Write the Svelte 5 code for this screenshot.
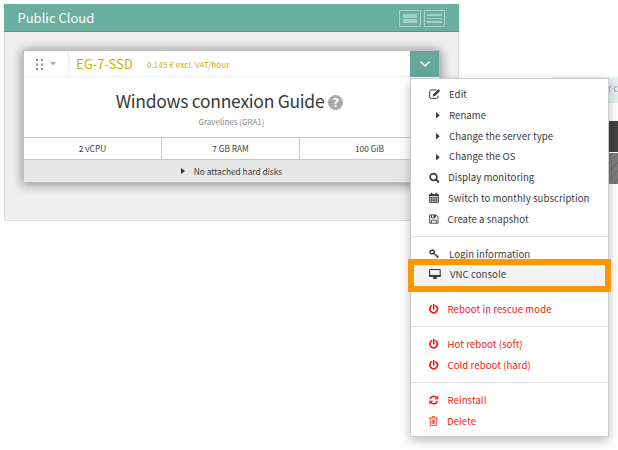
<script>
  const groups = [
    [
      { icon: 'edit', label: 'Edit', x: 20 },
      { icon: 'caret', label: 'Rename', x: 20 },
      { icon: 'caret', label: 'Change the server type', x: 20 },
      { icon: 'caret', label: 'Change the OS', x: 20 },
      { icon: 'search', label: 'Display monitoring', x: 19 },
      { icon: 'calendar', label: 'Switch to monthly subscription', x: 19 },
      { icon: 'save', label: 'Create a snapshot', x: 18.5 }
    ],
    [
      { icon: 'key', label: 'Login information', x: 20 },
      { icon: 'screen', label: 'VNC console', x: 21, active: true }
    ],
    [{ icon: 'power', label: 'Reboot in rescue mode', x: 18.5, danger: true }],
    [
      { icon: 'power', label: 'Hot reboot (soft)', x: 18.5, danger: true },
      { icon: 'power', label: 'Cold reboot (hard)', x: 18.5, danger: true }
    ],
    [
      { icon: 'refresh', label: 'Reinstall', x: 18.5, danger: true },
      { icon: 'trash', label: 'Delete', x: 18, danger: true }
    ]
  ];
  const specs = ['2 vCPU', '7 GB RAM', '100 GiB'];
</script>

{#snippet glyph(name)}
  <svg class="glyph" width="14" height="12" viewBox="0 0 14 12" fill="none" stroke="currentColor">
    {#if name === 'edit'}
      <path d="M7.5 2H2.2Q.7 2 .7 3.500V9Q.7 10.400 2.200 10.400H7.500Q9 10.400 9 9V7.500" stroke-width="1" />
      <path d="M3.800 8.500L4.200 6.300L9.300 1.200L11.100 3L6 8.100Z" fill="currentColor" stroke="none" />
    {:else if name === 'caret'}
      <path d="M7 3v6.500l3.700-3.250z" fill="currentColor" stroke="none" />
    {:else if name === 'search'}
      <circle cx="4.500" cy="5" r="3.400" stroke-width="1.700" />
      <path d="M7 7.500L9.300 9.800" stroke-width="2" stroke-linecap="round" />
    {:else if name === 'calendar'}
      <path d="M.5 2.500h9v8h-9zM.5 5.200h9M.5 7h9M.5 8.800h9M2.700 5v5.500M5 5v5.500M7.300 5v5.500" stroke-width=".8" />
      <path d="M.3 2.300h9.400v1.800H.3zM2 .8h1.300v2.400H2zM6.700.8H8v2.400H6.700z" fill="currentColor" stroke="none" />
    {:else if name === 'save'}
      <path d="M.7 1.900h6.300l2 2v6.300H.7zM2.500 2v2.800h3.800V2M2.500 10V7.200h4.800V10" stroke-width=".9" />
      <path d="M4.700 2h1.500v2.600H4.700z" fill="currentColor" stroke="none" />
    {:else if name === 'key'}
      <ellipse cx="3.100" cy="4" rx="2.200" ry="1.800" transform="rotate(-40 3.100 4)" stroke-width="1.400" />
      <path d="M4.700 5.200L9.300 9.700M6.300 7.600L7.300 6.400M7.700 9.400L9.400 7.600" stroke-width="1.200" />
    {:else if name === 'screen'}
      <rect x=".6" y="1.500" width="10.600" height="7" rx=".6" stroke-width="1.100" />
      <path d="M.5 7.100h11v1.900H.5zM4.500 9h3l.7 1.900H3.800z" fill="currentColor" stroke="none" />
    {:else if name === 'power'}
      <path d="M2.500 2.900A3.800 3.800 0 1 0 6.900 2.900" stroke-width="1.700" stroke-linecap="round" />
      <path d="M4.700 1.500v4.200" stroke-width="1.600" stroke-linecap="round" />
    {:else if name === 'refresh'}
      <path d="M1.200 5Q2 2.200 4.800 2.200Q6.400 2.200 7.700 3.500M8.400 7Q7.600 9.800 4.800 9.800Q3.200 9.800 1.900 8.500" stroke-width="1.500" />
      <path d="M9.300 1.500v3.700H5.600zM.3 10.500V6.800H4z" fill="currentColor" stroke="none" />
    {:else if name === 'trash'}
      <path d="M.3 3h8.400M3 2.800L3.400 1.500h2.200L6 2.800M1.300 3v7.400h6.400V3M3.200 4.700v4.200M4.500 4.700v4.200M5.800 4.700v4.200" stroke-width=".8" />
    {/if}
  </svg>
{/snippet}

<div class="page">
  <div class="behind">
    <div class="notice"><span>er c</span></div>
    <div class="dark"></div>
    <div class="hatched"></div>
  </div>

  <section class="panel">
    <header>
      <h1>Public Cloud</h1>
      <div class="views">
        <svg width="22" height="17"><path d="M.5.5h21v16H.5z" class="frame" /><path d="M4 4h14v4H4zM4 9h14v4H4z" class="bars" /></svg>
        <svg width="21" height="17"><path d="M.5.5h20v16H.5z" class="frame" /><path d="M3 4h15v2H3zM3 8h15v1H3zM3 11h15v2H3z" class="bars" /></svg>
      </div>
    </header>
    <div class="body">
      <article class="card">
        <div class="top">
          <div class="grip">
            <svg width="22" height="12"><path d="M0 0h2v2H0zM5 0h2v2H5zM0 4.500h2v2H0zM5 4.500h2v2H5zM0 9h2v2H0zM5 9h2v2H5z" fill="#888" /><path d="M14 3h6.200l-3.100 3.500z" fill="#aaa" /></svg>
          </div>
          <span class="flavor">EG-7-SSD</span>
          <span class="price">0.145 € excl. VAT/hour</span>
          <button aria-label="Actions"><svg width="12" height="8" viewBox="0 0 12 8"><path d="M1.500 1.500L6 6L10.500 1.500" fill="none" stroke="#fff" stroke-width="1.500" /></svg></button>
        </div>
        <div class="title">
          <div class="name"><h2>Windows connexion Guide</h2><span class="help">?</span></div>
          <p>Gravelines (GRA1)</p>
        </div>
        <div class="specs">
          {#each specs as spec}<div>{spec}</div>{/each}
        </div>
        <div class="disks"><svg width="4" height="6"><path d="M0 0v6l4-3z" fill="#333" /></svg><span>No attached hard disks</span></div>
      </article>
    </div>
  </section>

  <nav class="menu">
    {#each groups as group}
      <ul>
        {#each group as item}
          <li class:danger={item.danger} class:active={item.active}>
            <span class="slot" style="width: {item.x}px">{@render glyph(item.icon)}</span>
            <span>{item.label}</span>
          </li>
        {/each}
      </ul>
    {/each}
  </nav>
  <div class="highlight"></div>
</div>

<style>
  :global(body) { margin: 0; background: #fff; }
  .page { position: relative; box-sizing: border-box; width: 618px; height: 450px; padding: 4px; overflow: hidden; font-family: "Noto Sans CJK SC", "Noto Sans", sans-serif; color: #3a3a3a; }
  .page * { box-sizing: border-box; }
  h1, h2, p, ul { margin: 0; padding: 0; font-weight: 400; }
  .panel { width: 455px; }
  header { height: 28px; background: #6bafa0; border-bottom: 1px solid #4f9788; display: flex; align-items: center; justify-content: space-between; padding: 0 14px 0 13.500px; }
  h1 { color: #fff; font-size: 13px; line-height: 20px; }
  .views { display: flex; gap: 3px; padding-top: 2px; }
  .views svg { display: block; }
  .frame { fill: none; stroke: #a6cfc6; }
  .bars { fill: #a6cfc6; }
  .body { height: 189px; background: #efefef; border: 1px solid #ddd; border-top: 0; padding: 19px; }
  .card { width: 415px; height: 131px; background: #fff; box-shadow: 0 0 0 1px #c0c0c0, 0 1px 10px 2px rgba(0, 0, 0, .4); }
  .top { height: 26px; border-bottom: 1px solid #eee; display: flex; align-items: center; }
  .grip { width: 45px; height: 26px; border-right: 1px solid #eee; padding: 8px 0 0 12px; }
  .grip svg { display: block; }
  .flavor { color: #ccb100; font-size: 13px; line-height: 20px; margin-left: 7px; width: 71px; white-space: nowrap; }
  .price { color: #ccb100; font-size: 8px; line-height: 12px; letter-spacing: .1px; white-space: nowrap; padding-top: 2px; }
  button { margin-left: auto; width: 29px; height: 26px; border: 0; padding: 0; background: #65a898; display: flex; align-items: center; justify-content: center; }
  .title { height: 60px; padding-top: 12px; text-align: center; }
  .name { display: flex; justify-content: center; align-items: center; gap: 4px; height: 24px; padding-right: 4px; }
  h2 { font-size: 17.500px; line-height: 24px; letter-spacing: -.28px; white-space: nowrap; }
  .help { width: 15px; height: 15px; margin-top: 2px; border-radius: 50%; background: #aaa; color: #fff; font: bold 12px/15px "Open Sans", sans-serif; }
  p { font-size: 8px; line-height: 12px; margin-top: 3px; color: #888; }
  .specs { display: flex; height: 23px; border: solid #c8c8c8; border-width: 1px 0; font-size: 8.300px; line-height: 20px; text-align: center; }
  .specs div { width: 138px; }
  .specs div:first-child { width: 137px; }
  .specs div:last-child { width: 140px; }
  .specs div + div { border-left: 1px solid #c8c8c8; }
  .disks { height: 22px; background: #e7e7e7; display: flex; align-items: center; justify-content: center; gap: 9px; font-size: 8.300px; line-height: 22px; }
  .menu { position: absolute; left: 410px; top: 78px; width: 199px; height: 359px; background: #fff; border: 1px solid #ccc; padding-top: 5px; box-shadow: 0 4px 10px rgba(0, 0, 0, .25); font-size: 9.600px; letter-spacing: .07px; }
  .menu ul { list-style: none; padding-bottom: 6.400px; }
  .menu ul + ul { border-top: 1px solid #ddd; padding-top: 7px; }
  .menu ul:nth-child(2) { padding-bottom: 5.200px; }
  .menu ul:nth-child(3) { padding-bottom: 6.200px; }
  li { display: flex; align-items: center; height: 20.800px; line-height: 20.800px; padding-left: 18px; white-space: nowrap; }
  li.danger { color: #f11a0e; }
  li.active { height: 21px; padding-bottom: 1.600px; background: #f4f4f4; }
  .slot { flex: none; display: flex; }
  .glyph { flex: none; display: block; }
  .highlight { position: absolute; left: 408px; top: 259px; width: 203px; height: 33px; border: 6px solid #ff9800; }
  .behind { position: absolute; left: 552px; top: 77px; width: 66px; height: 108px; }
  .notice { display: flex; justify-content: flex-end; height: 26px; background: #e0f2ed; color: #b0b5b3; font-size: 10px; font-weight: 500; line-height: 21px; }
  .notice span { letter-spacing: -.4px; white-space: nowrap; }
  .dark { height: 31px; margin-top: 18px; background: #424242; }
  .hatched { height: 31px; margin-top: 1px; background: repeating-linear-gradient(135deg, #7c7c7c 0 5px, #707070 5px 6px); }
</style>
